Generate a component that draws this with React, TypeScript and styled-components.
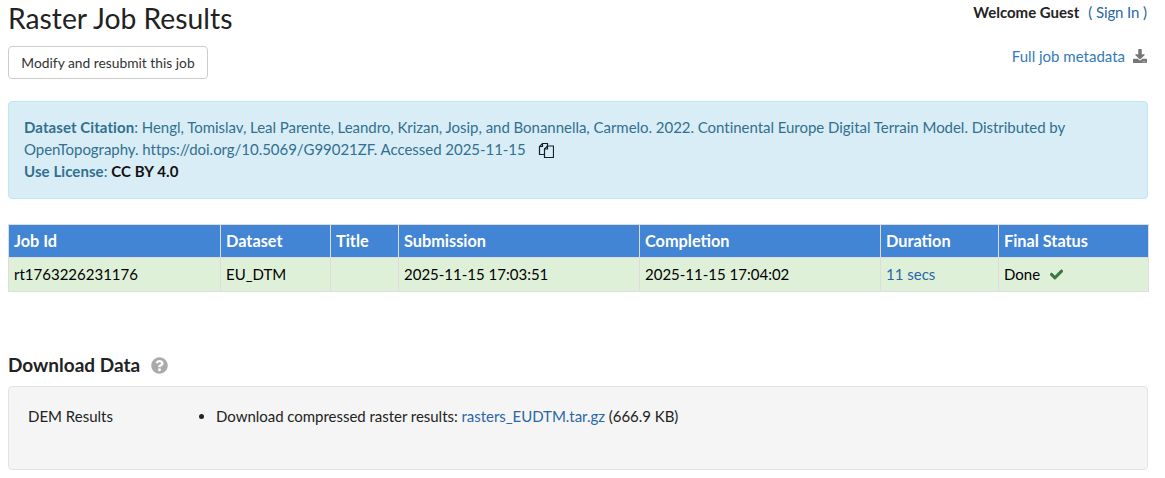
import styled, { createGlobalStyle } from "styled-components";
import { FaCheck, FaDownload, FaQuestionCircle } from "react-icons/fa";

const GlobalStyle = createGlobalStyle`
  html, body {
    margin: 0;
    padding: 0;
    background: #fff;
  }
  body {
    font-family: Lato, "Liberation Sans", sans-serif;
    font-size: 15px;
    line-height: 22px;
    color: #000;
  }
  a {
    color: #2a66a8;
    text-decoration: none;
  }
`;

const Page = styled.div`
  width: 1140px;
  margin-left: 8px;
`;

const TopBar = styled.div`
  display: flex;
  justify-content: space-between;
  align-items: flex-start;
  height: 101px;
`;

const Title = styled.h1`
  margin: 0 0 11px;
  padding-top: 1px;
  font-size: 28.3px;
  line-height: 34px;
  font-weight: 400;
  color: #222;
`;

const Button = styled.button`
  display: block;
  width: 200px;
  height: 33px;
  padding: 0;
  background: #fff;
  border: 1px solid #ccc;
  border-radius: 4px;
  font-family: inherit;
  font-size: 13.8px;
  color: #333;
`;

const Side = styled.div`
  display: flex;
  flex-direction: column;
  align-items: flex-end;
  padding-top: 1px;
`;

const Welcome = styled.div`
  display: flex;
  gap: 9px;
  margin-right: 1px;
  font-size: 15px;
  color: #222;
  b {
    font-weight: 700;
  }
`;

const Paren = styled.span`
  color: #2a6496;
  letter-spacing: -0.1px;
`;

const Metadata = styled.div`
  display: flex;
  align-items: center;
  gap: 8px;
  margin-top: 22px;
  a {
    color: #337ab7;
  }
  svg {
    margin-right: 1px;
    color: #777;
    font-size: 14px;
  }
`;

const Alert = styled.div`
  box-sizing: border-box;
  height: 98px;
  padding: 14px 15px;
  background: #d9edf7;
  border: 1px solid #bce8f1;
  border-radius: 4px;
  color: #31708f;
  letter-spacing: -0.035px;
  b {
    font-weight: 700;
    letter-spacing: 0.08px;
  }
`;

const CopyIcon = styled.svg`
  width: 16px;
  height: 16px;
  margin-left: 12px;
  vertical-align: -3px;
`;

const Licence = styled.b`
  color: #111;
`;

const JobTable = styled.table`
  width: 1140px;
  margin-top: 25px;
  border-collapse: collapse;
  table-layout: fixed;
`;

const HeadCell = styled.th`
  box-sizing: border-box;
  height: 33px;
  padding: 0 5px;
  background: #4285d4;
  border: 1px solid #ddd;
  color: #fff;
  font-weight: 700;
  font-size: 16.3px;
  text-align: left;
`;

const Cell = styled.td`
  box-sizing: border-box;
  height: 34px;
  padding: 0 5px 2px;
  background: #dff0d8;
  border: 1px solid #ddd;
`;

const DoneIcon = styled(FaCheck)`
  margin-left: 10px;
  font-size: 13px;
  color: #3c763d;
  vertical-align: -1px;
  stroke: currentColor;
  stroke-width: 24;
`;

const SectionTitle = styled.h3`
  display: flex;
  align-items: center;
  gap: 11px;
  margin: 61px 0 9px;
  font-size: 19px;
  line-height: 24px;
  font-weight: 700;
  color: #222;
  svg {
    font-size: 17px;
    color: #aaa;
  }
`;

const Well = styled.div`
  box-sizing: border-box;
  display: grid;
  grid-template-columns: 173px 1fr;
  height: 84px;
  padding: 18px 19px;
  background: #f5f5f5;
  border: 1px solid #e3e3e3;
  border-radius: 4px;
  color: #222;
`;

const ResultList = styled.ul`
  margin: 0;
  padding-left: 15px;
  letter-spacing: -0.03px;
`;

const columns = [212, 110, 68, 241, 241, 118, 150];
const heads = ["Job Id", "Dataset", "Title", "Submission", "Completion", "Duration", "Final Status"];

export default function App() {
  return (
    <Page>
      <GlobalStyle />
      <TopBar>
        <div>
          <Title>Raster Job Results</Title>
          <Button>Modify and resubmit this job</Button>
        </div>
        <Side>
          <Welcome>
            <b>Welcome Guest</b>
            <Paren>( <a href="#">Sign In</a> )</Paren>
          </Welcome>
          <Metadata>
            <a href="#">Full job metadata</a>
            <FaDownload />
          </Metadata>
        </Side>
      </TopBar>
      <Alert>
        <b>Dataset Citation</b>: Hengl, Tomislav, Leal Parente, Leandro, Krizan, Josip, and Bonannella, Carmelo. 2022. Continental Europe Digital Terrain Model. Distributed by OpenTopography. https://doi.org/10.5069/G99021ZF. Accessed 2025-11-15
        <CopyIcon viewBox="0 0 16 16" fill="none" stroke="#10222e" strokeWidth="1.2">
          <path d="M6 12.5H1.5V4.5L4.5 1.5H9.5V4" />
          <path d="M4.5 1.5V4.5H1.5" />
          <path d="M6.5 7L9.5 4H15.5V15.5H6.5Z" />
          <path d="M9.5 4V7H6.5" />
        </CopyIcon>
        <br />
        <b>Use License</b>: <Licence>CC BY 4.0</Licence>
      </Alert>
      <JobTable>
        <colgroup>
          {columns.map((w, i) => (
            <col key={i} width={w} />
          ))}
        </colgroup>
        <thead>
          <tr>
            {heads.map((h) => (
              <HeadCell key={h}>{h}</HeadCell>
            ))}
          </tr>
        </thead>
        <tbody>
          <tr>
            <Cell>rt1763226231176</Cell>
            <Cell>EU_DTM</Cell>
            <Cell />
            <Cell>2025-11-15 17:03:51</Cell>
            <Cell>2025-11-15 17:04:02</Cell>
            <Cell><a href="#">11 secs</a></Cell>
            <Cell>Done<DoneIcon /></Cell>
          </tr>
        </tbody>
      </JobTable>
      <SectionTitle>
        Download Data
        <FaQuestionCircle />
      </SectionTitle>
      <Well>
        <div>DEM Results</div>
        <ResultList>
          <li>
            Download compressed raster results: <a href="#">rasters_EUDTM.tar.gz</a> (666.9 KB)
          </li>
        </ResultList>
      </Well>
    </Page>
  );
}
